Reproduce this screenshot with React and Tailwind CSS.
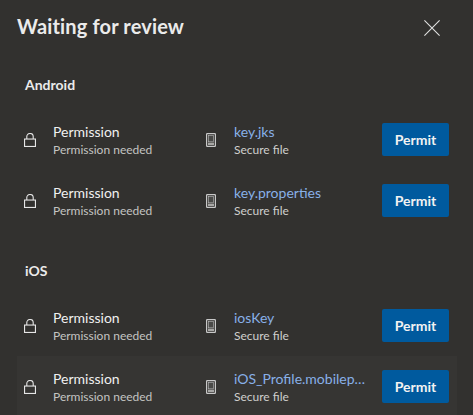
const FONT = "font-['Lato','Noto_Sans',sans-serif]";

function Lock() {
  return (
    <svg width="12" height="14" viewBox="0 0 12 14" fill="none" stroke="#e6e6e6" strokeWidth="1.1" className="shrink-0">
      <rect x="0.55" y="6.05" width="10.9" height="7.4" />
      <path d="M2.8 6V3.6a3.2 3.1 0 0 1 6.4 0V6" />
    </svg>
  );
}

function Device() {
  return (
    <svg width="10" height="14" viewBox="0 0 10 14" className="shrink-0">
      <rect x="0.6" y="0.6" width="8.8" height="12.8" rx="0.6" fill="none" stroke="#c8c8c8" strokeWidth="1.2" />
      <rect x="2.4" y="2.4" width="5.2" height="6.4" fill="#4a4a48" stroke="#bdbdbd" strokeWidth="0.6" />
      <rect x="2" y="9.6" width="6" height="2.4" fill="#a8a8a6" />
    </svg>
  );
}

function Row({ file, active }) {
  return (
    <div className={`flex h-[61px] items-center pl-[7px] pr-2 ${active ? "bg-[#363533]" : ""}`}>
      <div className="flex w-[29px] shrink-0 justify-start"><Lock /></div>
      <div className="w-[153px] shrink-0">
        <div className="text-[14px] leading-[19px] text-[#f0f0f0]">Permission</div>
        <div className="text-[12px] leading-[17px] text-[#c4c4c2]">Permission needed</div>
      </div>
      <div className="flex w-[28px] shrink-0 justify-start"><Device /></div>
      <div className="w-[148px] min-w-0 shrink-0 pr-[16px]">
        <div className="truncate text-[14px] leading-[19px] text-[#88b0e8]">{file}</div>
        <div className="text-[12px] leading-[17px] text-[#cfcfcd]">Secure file</div>
      </div>
      <button className="h-[33px] w-[67px] shrink-0 rounded-[2px] bg-[#005a9e] text-[14px] font-bold text-[#f2f2f2]">Permit</button>
    </div>
  );
}

function Group({ title, files, activeIdx }) {
  return (
    <section>
      <h3 className="pl-[8px] text-[14px] font-bold leading-[19px] text-[#ebebeb]">{title}</h3>
      <div className="mt-[15px]">
        {files.map((f, i) => <Row key={f} file={f} active={i === activeIdx} />)}
      </div>
    </section>
  );
}

export default function App() {
  return (
    <div className={`h-[415px] w-[473px] overflow-hidden bg-[#32312f] ${FONT}`}>
      <header className="flex h-[56px] items-center justify-between pl-[17px] pr-[33px]">
        <h2 className="mb-[4px] text-[20px] font-bold leading-[27px] tracking-[0.15px] text-[#ebebeb]">Waiting for review</h2>
        <svg width="16" height="16" viewBox="0 0 16 16" stroke="#e0e0e0" strokeWidth="1.1" fill="none">
          <path d="M0.4 0.4L15.6 15.6M15.6 0.4L0.4 15.6" />
        </svg>
      </header>
      <div className="mt-[19px] pl-[17px] pr-[16px]">
        <Group title="Android" files={["key.jks", "key.properties"]} />
        <div className="h-[30px]" />
        <Group title="iOS" files={["iosKey", "iOS_Profile.mobileprovision"]} activeIdx={1} />
      </div>
    </div>
  );
}
